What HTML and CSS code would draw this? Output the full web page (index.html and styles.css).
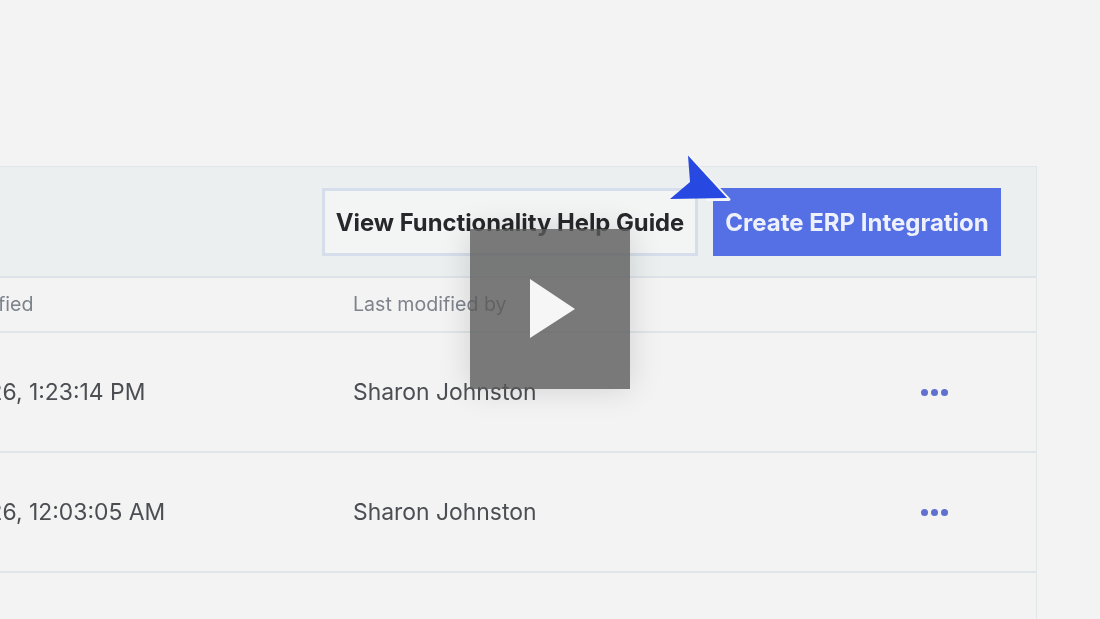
FILE: index.html
```html
<!DOCTYPE html>
<html lang="en">
<head>
<meta charset="utf-8">
<title>ERP Integrations</title>
<link rel="stylesheet" href="styles.css">
</head>
<body>
<main class="stage">
  <section class="panel">
    <div class="toolbar">
      <button class="btn btn-help">View Functionality Help Guide</button>
      <button class="btn btn-create">Create ERP Integration</button>
    </div>
    <div class="row head">
      <span class="col-date">Last modified</span>
      <span class="col-user">Last modified by</span>
    </div>
    <div class="row item">
      <span class="col-date">01/12/26, 1:23:14 PM</span>
      <span class="col-user">Sharon Johnston</span>
      <span class="dots"><i></i><i></i><i></i></span>
    </div>
    <div class="row item">
      <span class="col-date">01/12/26, 12:03:05 AM</span>
      <span class="col-user">Sharon Johnston</span>
      <span class="dots"><i></i><i></i><i></i></span>
    </div>
    <div class="row item last"></div>
  </section>
  <svg class="cursor" width="64" height="50" viewBox="0 0 64 50">
    <path d="M20 3 L61 46.500 L38 46.500" fill="none" stroke="#f6f7f8" stroke-width="3" stroke-linejoin="round"/>
    <path d="M20 2.500 L59 45 L2 46 L22 29 Z" fill="#2749e2"/>
  </svg>
</main>
<div class="play">
  <svg width="46" height="60" viewBox="0 0 46 60"><path d="M0 0 L45 30 L0 59 Z" fill="#f6f6f6"/></svg>
</div>
</body>
</html>
```
FILE: styles.css
```css
* { box-sizing: border-box; }
html, body { margin: 0; height: 100%; }
body {
  background: #f3f3f4;
  overflow: hidden;
  position: relative;
  font-family: "Inter", "Liberation Sans", sans-serif;
}
.stage {
  position: relative;
  height: 619px;
  overflow: hidden;
  padding: 166px 63px 0 0;
  display: flex;
  justify-content: flex-end;
  filter: blur(0.5px);
}
.panel {
  width: 1300px;
  flex: none;
  border: 1px solid #e1e6e9;
  border-bottom: 0;
  height: 453px;
}
.toolbar {
  height: 111px;
  background: #ebeff0;
  border-bottom: 2px solid #dde3e8;
  padding: 21px 35px 0 0;
  display: flex;
  justify-content: flex-end;
  gap: 15px;
}
.btn {
  height: 68px;
  font: 700 23.800px "Inter", "Liberation Sans", sans-serif;
  padding: 0;
}
.btn-help {
  width: 376px;
  background: #f3f4f4;
  border: 3px solid #d5deea;
  color: #26282b;
}
.btn-create {
  width: 288px;
  background: #5470e4;
  border: 0;
  color: #eef1fb;
  font-size: 24px;
}
.row {
  display: grid;
  grid-template-columns: 615px 1fr 115px;
  align-items: center;
  border-bottom: 2px solid #dfe4e7;
}
.head {
  height: 54.500px;
  font-size: 19.600px;
  color: #7d838b;
}
.head .col-date { padding-left: 170px; }
.item {
  height: 120px;
  padding-top: 1px;
  font-size: 22.900px;
  color: #4b4e52;
}
.item .col-date { padding-left: 187px; }
.last { border-bottom: 0; }
.dots {
  display: flex;
  gap: 3px;
}
.dots i {
  width: 7px;
  height: 7px;
  border-radius: 50%;
  background: #5f70cf;
}
.cursor {
  position: absolute;
  left: 668px;
  top: 153px;
}
.play {
  position: absolute;
  left: 470px;
  top: 229px;
  width: 160px;
  height: 160px;
  background: rgba(90, 90, 90, 0.8);
  box-shadow: 0 0 30px rgba(0, 0, 0, 0.14);
  display: flex;
  align-items: center;
  justify-content: center;
  padding-left: 6px;
}
```
